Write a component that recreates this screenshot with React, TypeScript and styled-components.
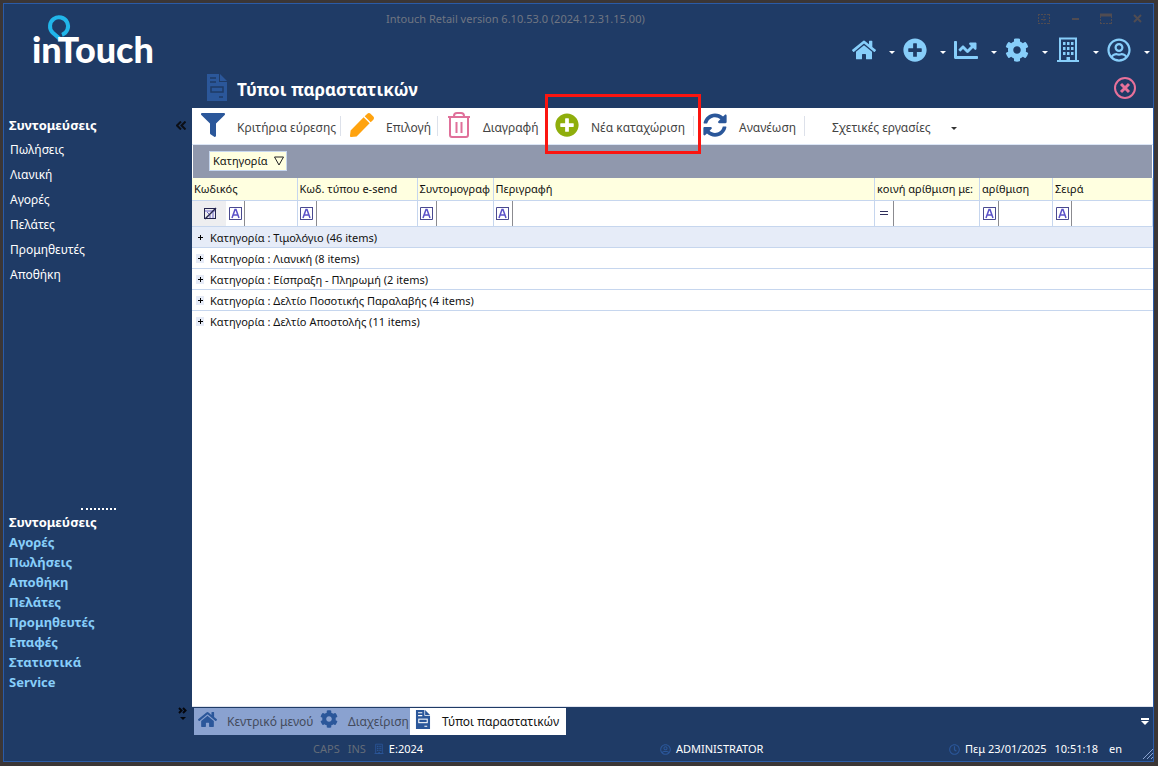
import React from "react";
import styled, { createGlobalStyle } from "styled-components";
import {
  FaHome,
  FaPlusCircle,
  FaChartLine,
  FaCog,
  FaRegUserCircle,
  FaFilter,
  FaPen,
  FaSyncAlt,
  FaRegClock,
} from "react-icons/fa";

const c = {
  navy: "#1f3b66",
  sky: "#87cefa",
  blue: "#2b579a",
  line: "#c6d6ee",
  cream: "#ffffe0",
};

const Global = createGlobalStyle`
  * { box-sizing: border-box; }
  body {
    margin: 0;
    font-family: "Noto Sans", "Open Sans", sans-serif;
    font-size: 11px;
    line-height: 16px;
    color: #111;
  }
  button, input { font: inherit; color: inherit; border: 0; padding: 0; margin: 0; background: none; }
  button { cursor: pointer; }
  svg { display: block; flex: none; }
  ul { list-style: none; margin: 0; padding: 0; }
`;

const Shell = styled.div`
  min-height: 100vh;
  display: flex;
  flex-direction: column;
  border: 3px solid #3b3636;
  border-right-width: 4px;
  border-bottom-width: 4px;
  background: ${c.navy};
`;
const Frame = styled.div`
  flex: 1;
  display: flex;
  flex-direction: column;
  border: 1px solid #2a5ba8;
`;
const Columns = styled.div<{ $grow?: boolean }>`
  display: grid;
  grid-template-columns: 188px minmax(0, 1fr);
  flex: ${(p) => (p.$grow ? "1" : "none")};
`;
const Brand = styled.div`
  padding: 10px 0 0 28px;
`;
const CaptionRow = styled.div`
  height: 30px;
  display: flex;
  align-items: center;
  justify-content: space-between;
  padding: 0 8px 0 194px;
  color: #707682;
`;
const WindowButtons = styled.div`
  display: flex;
  gap: 15px;
  color: #504c52;
`;
const IconButton = styled.button`
  display: flex;
  align-items: center;
`;
const MenuRow = styled.nav`
  height: 32px;
  display: flex;
  align-items: center;
  justify-content: flex-end;
  gap: 8px;
  padding-right: 3px;
`;
const Caret = styled.span<{ $color: string }>`
  border: 3px solid transparent;
  border-top-color: ${(p) => p.$color};
  border-bottom: 0;
`;
const MenuButton = styled.button`
  display: flex;
  align-items: center;
  gap: 13px;
  color: ${c.sky};
  ${Caret} { margin-top: 4px; }
`;
const TitleRow = styled.div`
  height: 42px;
  display: flex;
  align-items: center;
  padding: 1px 17px 0 15px;
  gap: 10px;
  color: ${c.blue};
`;
const Title = styled.h1`
  flex: 1;
  margin: 0;
  padding-top: 4px;
  font-size: 17px;
  line-height: 22px;
  color: #fff;
`;
const CloseButton = styled(IconButton)`
  color: #e8719a;
`;

const Sidebar = styled.aside`
  display: flex;
  flex-direction: column;
  color: #fff;
  padding-bottom: 14px;
`;
const SideHead = styled.div`
  display: flex;
  align-items: center;
  justify-content: space-between;
  height: 20px;
  padding: 0 6px 0 5px;
`;
const SideTitle = styled.h2`
  margin: 0;
  font-size: 13px;
  line-height: 20px;
`;
const NavList = styled.ul`
  padding: 2px 0 0 6px;
  flex: 1;
  font-size: 12px;
  line-height: 25px;
`;
const GroupList = styled.ul`
  font-size: 13px;
  font-weight: 700;
  line-height: 20px;
  color: ${c.sky};
`;
const SideLink = styled.a`
  color: inherit;
  text-decoration: none;
`;
const Upper = styled.nav`
  flex: 1;
  padding-top: 7px;
`;
const Splitter = styled.div`
  width: 35px;
  margin: 0 0 2px 77px;
  border-top: 2px dotted #fff;
`;
const Lower = styled.nav`
  padding-left: 5px;
`;
const Overflow = styled.button`
  align-self: flex-end;
  margin: 15px 5px 0 0;
`;

const Main = styled.main`
  display: flex;
  flex-direction: column;
`;
const Sheet = styled.section`
  flex: 1;
  background: #fff;
  border-bottom: 1px solid #dfe3ee;
`;
const Toolbar = styled.div`
  height: 37px;
  display: flex;
  align-items: stretch;
  border-bottom: 1px solid #dbe5f5;
`;
const Tool = styled.button<{ $w: number }>`
  position: relative;
  width: ${(p) => p.$w}px;
  flex: none;
  display: flex;
  align-items: center;
  gap: 12px;
  padding: 0 0 2px 9px;
  white-space: nowrap;
  font-size: 12px;
  color: #444;
  &::after {
    content: "";
    position: absolute;
    right: 0;
    top: 8px;
    bottom: 8px;
    border-right: 1px solid #dde1ea;
  }
`;
const ToolText = styled.span`
  padding-top: 6px;
`;
const RelatedTool = styled.button`
  display: flex;
  align-items: center;
  gap: 20px;
  padding: 4px 0 0 27px;
  font-size: 12px;
  color: #444;
`;
const Highlight = styled.span`
  position: absolute;
  z-index: 1;
  left: -1px;
  right: -7px;
  top: -14px;
  bottom: -10px;
  border: 3px solid #fb1510;
  pointer-events: none;
`;
const GroupPanel = styled.div`
  height: 33px;
  padding: 6px 0 0 16px;
  margin: 0 1px;
  background: #9098ad;
`;
const Chip = styled.button`
  display: flex;
  align-items: center;
  justify-content: space-between;
  width: 78px;
  height: 20px;
  padding: 0 2px 0 3px;
  border: 1px solid ${c.line};
  background: ${c.cream};
`;

const Grid = styled.table`
  width: 100%;
  border-collapse: collapse;
  table-layout: fixed;
`;
const HeadCell = styled.th`
  height: 22px;
  padding: 0 2px;
  text-align: left;
  font-weight: 400;
  white-space: nowrap;
  overflow: hidden;
  background: ${c.cream};
  border-right: 1px solid ${c.line};
  border-bottom: 1px solid ${c.line};
`;
const FilterCell = styled.td`
  height: 26px;
  padding: 0;
  border-right: 1px solid ${c.line};
  border-bottom: 1px solid ${c.line};
`;
const FilterBox = styled.label`
  display: flex;
  align-items: center;
  height: 25px;
`;
const Indicator = styled.span`
  width: 34px;
  height: 25px;
  display: flex;
  align-items: center;
  justify-content: center;
  padding-left: 2px;
  background: #eeeef0;
`;
const Operator = styled.span`
  width: 18px;
  flex: none;
  display: flex;
  justify-content: center;
`;
const FilterInput = styled.input`
  flex: 1;
  min-width: 0;
  height: 25px;
  border-left: 1px solid #8b8b90;
  padding: 0 3px;
  outline: 0;
`;
const GroupCell = styled.td<{ $active?: boolean }>`
  height: 21px;
  padding: 2px 0 0 4px;
  background: ${(p) => (p.$active ? "#e6ecf8" : "#fff")};
  border-bottom: 1px solid ${c.line};
  tr:last-child > & { border-bottom: 0; }
`;
const GroupLine = styled.div`
  display: flex;
  align-items: center;
  gap: 6px;
`;
const Expander = styled.button`
  background: #e6ebf7;
`;

const TabBar = styled.div`
  height: 28px;
  display: flex;
  align-items: stretch;
  padding: 1px 4px 0 2px;
`;
const Tab = styled.button<{ $active?: boolean; $w: number }>`
  width: ${(p) => p.$w}px;
  display: flex;
  align-items: center;
  gap: 10px;
  padding: 0 0 5px 4px;
  font-size: 12px;
  white-space: nowrap;
  color: ${(p) => (p.$active ? "#111" : "#444b5c")};
  background: ${(p) => (p.$active ? "#fff" : "#8aa2d0")};
  svg { color: ${c.blue}; }
`;
const TabText = styled.span`
  padding-top: 6px;
`;
const TabMenu = styled(IconButton)`
  margin-left: auto;
  color: #fff;
`;
const Status = styled.footer`
  height: 26px;
  display: grid;
  grid-template-columns: 347fr 289fr 204fr;
  align-items: center;
  padding: 2px 0 0 309px;
  color: #fff;
`;
const StatusGroup = styled.div<{ $gap: number }>`
  display: flex;
  align-items: center;
  gap: ${(p) => p.$gap}px;
`;
const StatusItem = styled.span`
  display: flex;
  align-items: center;
  gap: 5px;
  svg { color: #2b579a; }
`;
const Dim = styled.span`
  color: #646c78;
`;
const Grip = styled.span`
  margin-left: auto;
  padding-top: 10px;
`;

const Logo = () => (
  <svg width="140" height="60" viewBox="0 0 140 60" role="img" aria-label="inTouch">
    <path d="M30 20.800A9 9 0 1 0 20.500 18.500L28 25" fill="none" stroke="#21b6ea" strokeWidth="4" />
    <text x="0" y="49" fontFamily="Lato, sans-serif" fontWeight="900" fontSize="36" fill="#fff">
      inTouch
    </text>
  </svg>
);

const Building = ({ size }: { size: number }) => (
  <svg width={size} height={size + 2} viewBox="0 0 24 26" fill="currentColor">
    <path d="M4 1.500h16V24H4z" fill="none" stroke="currentColor" strokeWidth="2" />
    <path d="M1 23h22v2H1zM7 5h2.500v3H7zM11 5h2.500v3H11zM15 5h2.500v3H15zM7 10h2.500v3H7zM11 10h2.500v3H11zM15 10h2.500v3H15zM7 15h2.500v3H7zM11 15h2.500v3H11zM15 15h2.500v3H15zM10.500 20h3.500v4h-3.500z" />
  </svg>
);

const DocIcon = ({ width, height, hole }: { width: number; height: number; hole: string }) => (
  <svg width={width} height={height} viewBox="0 0 20 27">
    <path d="M0 0h12v8h8v19H0z" fill="currentColor" />
    <path d="M13 0l7 7h-7z" fill="currentColor" />
    <path d="M3 4h6M3 8h6M12 23h4" stroke={hole} strokeWidth="1.500" />
    <rect x="4" y="13" width="12" height="5" fill="none" stroke={hole} strokeWidth="1.500" />
  </svg>
);

const TrashIcon = () => (
  <svg width="24" height="26" viewBox="0 0 24 26" fill="none" stroke="#e0709a" strokeWidth="2">
    <path d="M1 5h22M7 5V4q0-3 3-3h4q3 0 3 3v1M3 5v18q0 2 2 2h14q2 0 2-2V5M9.500 10v11M14.500 10v11" />
  </svg>
);

const CircleX = () => (
  <svg width="22" height="22" viewBox="0 0 22 22" fill="none" stroke="currentColor">
    <circle cx="11" cy="11" r="10" strokeWidth="2" />
    <path d="M7 7l8 8M15 7l-8 8" strokeWidth="3" />
  </svg>
);

const LetterOp = () => (
  <svg width="13" height="13" viewBox="0 0 13 13" fill="none">
    <path d="M12.500 0v12.500H0M.5 12V.5H12" stroke="#4a4a90" />
    <path d="M3 11L6 2.500h1L10 11M4 8h5" stroke="#5a50c8" strokeWidth="1.500" />
  </svg>
);
const EqualsOp = () => (
  <svg width="8" height="5" viewBox="0 0 8 5">
    <path d="M0 .5h8M0 3.500h8" stroke="#30305c" />
  </svg>
);
const FilterMark = () => (
  <svg width="13" height="13" viewBox="0 0 13 13" fill="none" stroke="#25254f">
    <rect x=".5" y="1.500" width="11" height="10" />
    <path d="M1 4h10" stroke="#6a62c8" />
    <path d="M3 5l3 3v3M9 5v6" stroke="#6a62c8" />
    <path d="M1 12L12 1" strokeWidth="1.500" />
  </svg>
);
const Plus = () => (
  <svg width="8" height="9" viewBox="0 0 8 9">
    <path d="M2 4.500h5M4.500 2v5" stroke="#000" />
  </svg>
);
const Collapse = () => (
  <svg width="10" height="9" viewBox="0 0 10 9" fill="none" stroke="#0c0f16" strokeWidth="2">
    <path d="M5 .5l-4 4 4 4M9.500 .5l-4 4 4 4" />
  </svg>
);
const More = () => (
  <svg width="9" height="14" viewBox="0 0 9 14" fill="none" stroke="#05070c" strokeWidth="2">
    <path d="M1 1l2.500 2.500L1 6M5 1l2.500 2.500L5 6" />
    <path d="M2 10h6l-3 3z" fill="#05070c" stroke="none" />
  </svg>
);

const menu = [
  { label: "Home", icon: <FaHome size={24} /> },
  { label: "New", icon: <FaPlusCircle size={24} /> },
  { label: "Statistics", icon: <FaChartLine size={24} /> },
  { label: "Settings", icon: <FaCog size={24} /> },
  { label: "Company", icon: <Building size={24} /> },
  { label: "User", icon: <FaRegUserCircle size={24} /> },
];
const shortcuts = ["Πωλήσεις", "Λιανική", "Αγορές", "Πελάτες", "Προμηθευτές", "Αποθήκη"];
const groups = ["Αγορές", "Πωλήσεις", "Αποθήκη", "Πελάτες", "Προμηθευτές", "Επαφές", "Στατιστικά", "Service"];
const columns: { name: string; width?: number; op?: "eq" }[] = [
  { name: "Κωδικός", width: 105 },
  { name: "Κωδ. τύπου e-send", width: 120 },
  { name: "Συντομογραφ", width: 76 },
  { name: "Περιγραφή" },
  { name: "κοινή αρίθμιση με:", width: 105, op: "eq" },
  { name: "αρίθμιση", width: 73 },
  { name: "Σειρά", width: 100 },
];
const rows = [
  "Τιμολόγιο (46 items)",
  "Λιανική (8 items)",
  "Είσπραξη - Πληρωμή (2 items)",
  "Δελτίο Ποσοτικής Παραλαβής (4 items)",
  "Δελτίο Αποστολής (11 items)",
];

export default function App() {
  return (
    <>
      <Global />
      <Shell>
        <Frame>
          <Columns as="header">
            <Brand>
              <Logo />
            </Brand>
            <div>
              <CaptionRow>
                <span>Intouch Retail version 6.10.53.0 (2024.12.31.15.00)</span>
                <WindowButtons>
                  <IconButton aria-label="Dock">
                    <svg width="16" height="12" viewBox="0 0 16 12" fill="none" stroke="currentColor">
                      <path d="M2 1.500h12M2.500 1v10M13.500 1v10M2 10.500h12M8 3v6M5 6.500h6" strokeDasharray="2 1" />
                    </svg>
                  </IconButton>
                  <IconButton aria-label="Minimize">
                    <svg width="16" height="12" viewBox="0 0 16 12">
                      <path d="M5 6h7" stroke="currentColor" strokeWidth="2" />
                    </svg>
                  </IconButton>
                  <IconButton aria-label="Maximize">
                    <svg width="16" height="12" viewBox="0 0 16 12" fill="none" stroke="currentColor">
                      <path d="M2 2h12" strokeWidth="3" />
                      <path d="M2.500 3v8M13.500 3v8M2 10.500h12" strokeDasharray="2 1" />
                    </svg>
                  </IconButton>
                  <IconButton aria-label="Close window">
                    <svg width="16" height="12" viewBox="0 0 16 12">
                      <path d="M5 2l7 7M12 2l-7 7" stroke="currentColor" strokeWidth="2" />
                    </svg>
                  </IconButton>
                </WindowButtons>
              </CaptionRow>
              <MenuRow>
                {menu.map((m) => (
                  <MenuButton key={m.label} aria-label={m.label}>
                    {m.icon}
                    <Caret $color="#fff" />
                  </MenuButton>
                ))}
              </MenuRow>
              <TitleRow>
                <DocIcon width={20} height={27} hole={c.navy} />
                <Title>Τύποι παραστατικών</Title>
                <CloseButton aria-label="Close">
                  <CircleX />
                </CloseButton>
              </TitleRow>
            </div>
          </Columns>
          <Columns $grow>
            <Sidebar>
              <Upper>
                <SideHead>
                  <SideTitle>Συντομεύσεις</SideTitle>
                  <IconButton aria-label="Collapse">
                    <Collapse />
                  </IconButton>
                </SideHead>
                <NavList>
                  {shortcuts.map((s) => (
                    <li key={s}>
                      <SideLink href="#">{s}</SideLink>
                    </li>
                  ))}
                </NavList>
              </Upper>
              <Splitter />
              <Lower>
                <SideTitle>Συντομεύσεις</SideTitle>
                <GroupList>
                  {groups.map((g) => (
                    <li key={g}>
                      <SideLink href="#">{g}</SideLink>
                    </li>
                  ))}
                </GroupList>
              </Lower>
              <Overflow aria-label="More">
                <More />
              </Overflow>
            </Sidebar>
            <Main>
              <Sheet>
                <Toolbar>
                  <Tool $w={149}>
                    <FaFilter size={24} color={c.blue} />
                    <ToolText>Κριτήρια εύρεσης</ToolText>
                  </Tool>
                  <Tool $w={97}>
                    <FaPen size={24} color="#ffa30f" />
                    <ToolText>Επιλογή</ToolText>
                  </Tool>
                  <Tool $w={108}>
                    <TrashIcon />
                    <ToolText>Διαγραφή</ToolText>
                  </Tool>
                  <Tool $w={148}>
                    <FaPlusCircle size={24} color="#8fae0c" />
                    <ToolText>Νέα καταχώριση</ToolText>
                    <Highlight />
                  </Tool>
                  <Tool $w={111}>
                    <FaSyncAlt size={24} color={c.blue} />
                    <ToolText>Ανανέωση</ToolText>
                  </Tool>
                  <RelatedTool>
                    Σχετικές εργασίες
                    <Caret $color="#333" />
                  </RelatedTool>
                </Toolbar>
                <GroupPanel>
                  <Chip>
                    Κατηγορία
                    <svg width="10" height="10" viewBox="0 0 10 10">
                      <path d="M.5 1h9L5 9z" fill="none" stroke="#222" />
                    </svg>
                  </Chip>
                </GroupPanel>
                <Grid>
                  <colgroup>
                    {columns.map((col) => (
                      <col key={col.name} width={col.width} />
                    ))}
                  </colgroup>
                  <thead>
                    <tr>
                      {columns.map((col) => (
                        <HeadCell key={col.name} scope="col">
                          {col.name}
                        </HeadCell>
                      ))}
                    </tr>
                  </thead>
                  <tbody>
                    <tr>
                      {columns.map((col, i) => (
                        <FilterCell key={col.name}>
                          <FilterBox>
                            {i === 0 && (
                              <Indicator>
                                <FilterMark />
                              </Indicator>
                            )}
                            <Operator>{col.op ? <EqualsOp /> : <LetterOp />}</Operator>
                            <FilterInput aria-label={col.name} />
                          </FilterBox>
                        </FilterCell>
                      ))}
                    </tr>
                    {rows.map((r, i) => (
                      <tr key={r}>
                        <GroupCell colSpan={7} $active={i === 0}>
                          <GroupLine>
                            <Expander aria-label="Expand">
                              <Plus />
                            </Expander>
                            Κατηγορία : {r}
                          </GroupLine>
                        </GroupCell>
                      </tr>
                    ))}
                  </tbody>
                </Grid>
              </Sheet>
              <TabBar>
                <Tab $w={122}>
                  <FaHome size={19} />
                  <TabText>Κεντρικό μενού</TabText>
                </Tab>
                <Tab $w={94}>
                  <FaCog size={18} />
                  <TabText>Διαχείριση</TabText>
                </Tab>
                <Tab $w={156} $active>
                  <DocIcon width={18} height={19} hole="#fff" />
                  <TabText>Τύποι παραστατικών</TabText>
                </Tab>
                <TabMenu aria-label="Open tabs">
                  <svg width="8" height="8" viewBox="0 0 8 8" fill="currentColor">
                    <path d="M0 0h8v2H0zM0 3h8L4 7z" />
                  </svg>
                </TabMenu>
              </TabBar>
            </Main>
          </Columns>
          <Status>
            <StatusGroup $gap={8}>
              <Dim>CAPS</Dim>
              <Dim>INS</Dim>
              <StatusItem>
                <Building size={10} />
                E:2024
              </StatusItem>
            </StatusGroup>
            <StatusItem>
              <FaRegUserCircle size={11} />
              ADMINISTRATOR
            </StatusItem>
            <StatusGroup $gap={8}>
              <StatusItem>
                <FaRegClock size={11} />
                Πεμ 23/01/2025
              </StatusItem>
              <span>10:51:18</span>
              <span>&nbsp;en</span>
              <Grip>
                <svg width="10" height="10" viewBox="0 0 10 10" stroke="#8aa2d0">
                  <path d="M0 10L10 0M4 10l6-6M8 10l2-2" />
                </svg>
              </Grip>
            </StatusGroup>
          </Status>
        </Frame>
      </Shell>
    </>
  );
}
